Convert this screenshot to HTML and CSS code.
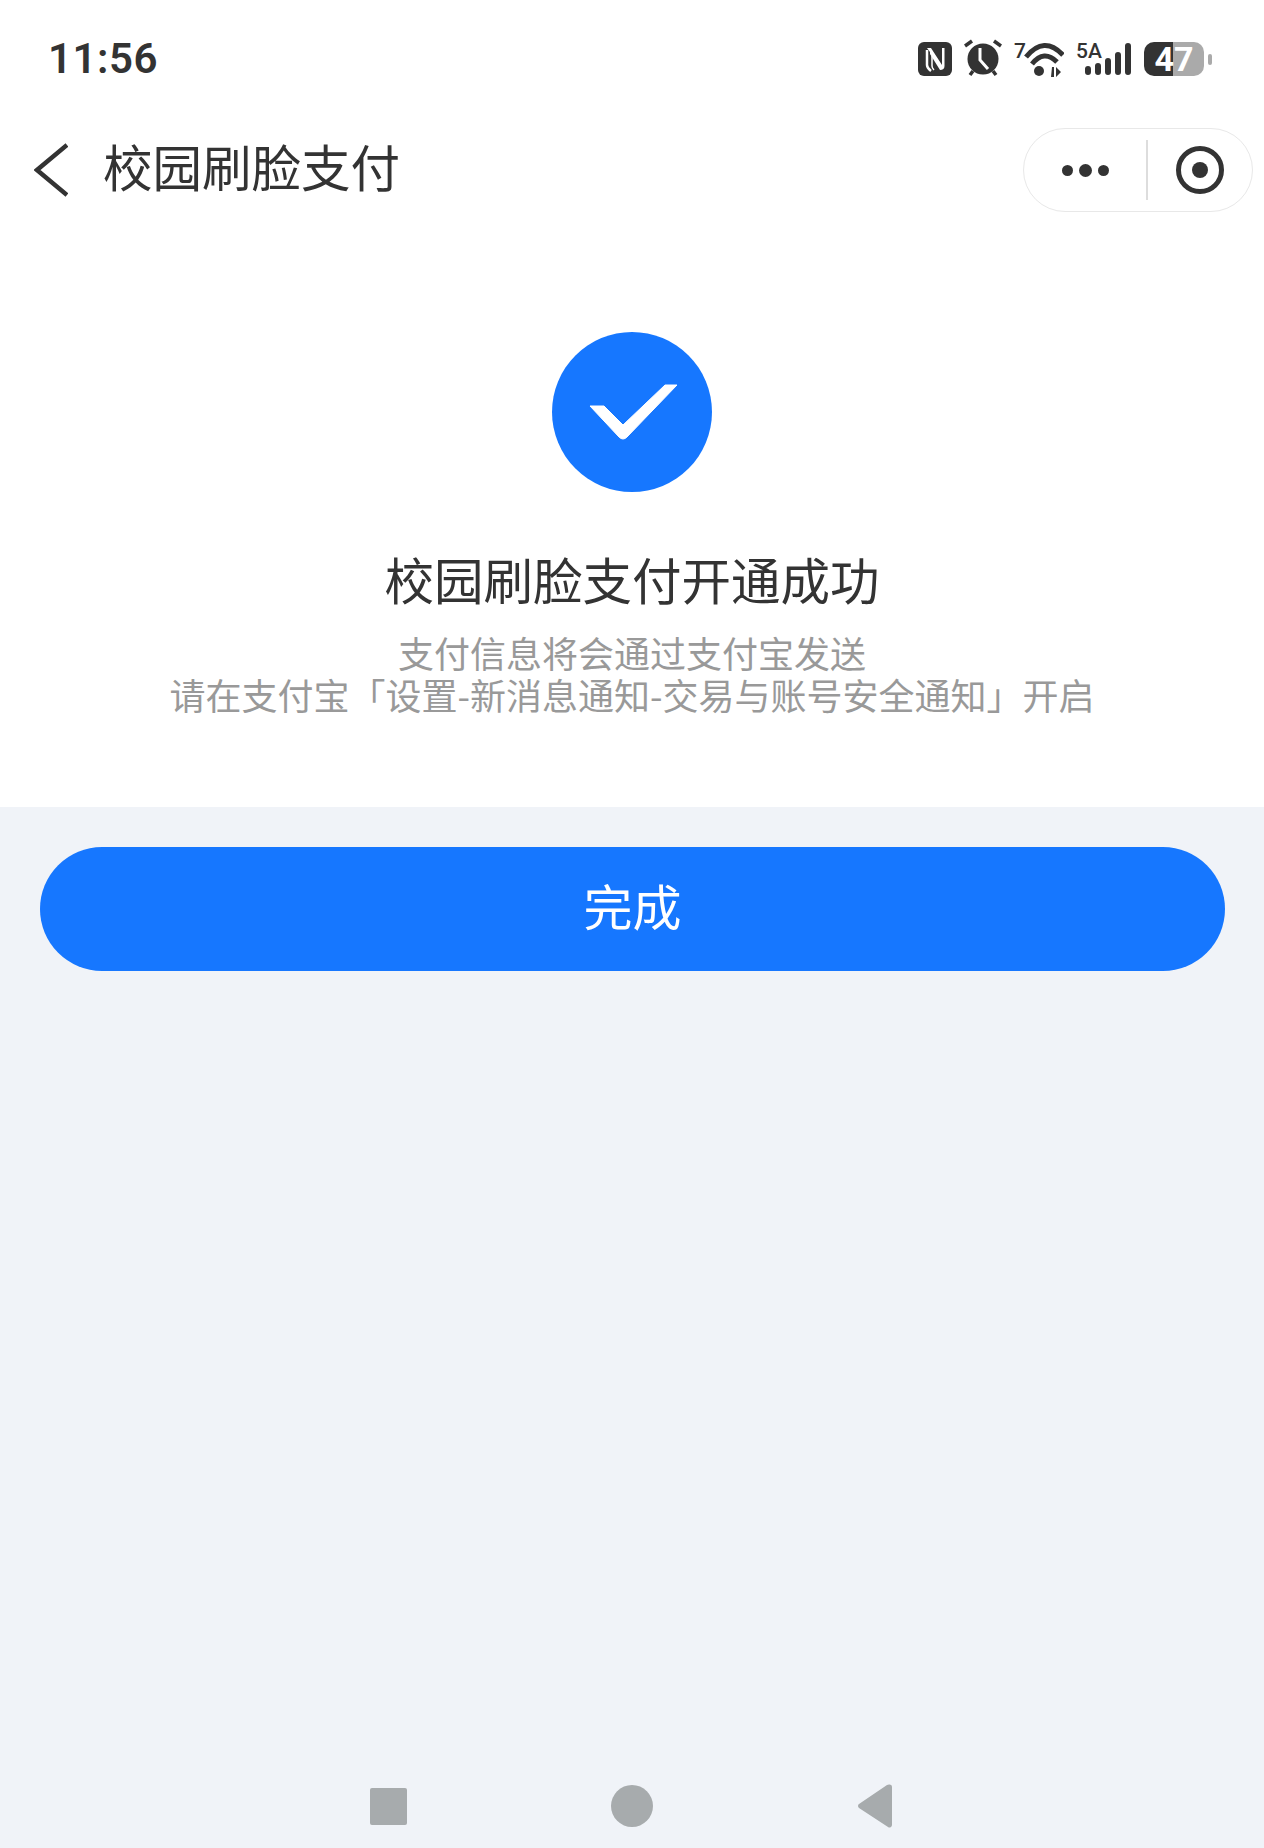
FILE: index.html
```html
<!DOCTYPE html>
<html lang="zh-CN">
<head>
  <meta charset="UTF-8">
  <meta name="viewport" content="width=device-width, initial-scale=1.0">
  <title>校园刷脸支付</title>
  <link rel="stylesheet" href="styles.css">
</head>
<body>
  <div class="page">
    <div class="top">
      <!-- 状态栏 -->
      <div class="status-bar">
        <span class="time">11:56</span>
        <div class="status-icons">
          <svg class="ic-nfc" width="34" height="34" viewBox="0 0 34 34">
            <rect width="34" height="34" rx="6" fill="#333"/>
            <path d="M9 8V23Q9 26 13 29" fill="none" stroke="#fff" stroke-width="2.500"/>
            <path d="M9 6h4L24 23V6h2.500V24Q26.500 28 22 28L12 12V10z" fill="#fff"/>
            <path d="M14 14V24Q14 26 16 28" fill="none" stroke="#fff" stroke-width="1.500"/>
          </svg>
          <svg class="ic-alarm" width="38" height="38" viewBox="0 0 38 38">
            <circle cx="19" cy="20" r="15.500" fill="#333"/>
            <path d="M1 7l7-5M37 7l-7-5M6 36l3-4M32 36l-3-4" stroke="#333" stroke-width="3.500" fill="none"/>
            <path d="M16 9v12l8 9" stroke="#fff" stroke-width="3" fill="none"/>
          </svg>
          <svg class="ic-wifi" width="50" height="42" viewBox="0 0 50 42">
            <text class="ic-text" x="0" y="20">7</text>
            <path d="M12 19Q30-3 49 17M18 26Q30 11 43 24" fill="none" stroke="#333" stroke-width="5"/>
            <circle cx="25" cy="33" r="5" fill="#333"/>
            <path d="M37 39h3V29h-2l-1 10zM42 29v10l5-5z" fill="#333"/>
          </svg>
          <svg class="ic-signal" width="56" height="42" viewBox="0 0 56 42">
            <text class="ic-text" x="0" y="20">5A</text>
            <g stroke="#333" stroke-width="6" stroke-linecap="round">
              <path d="M12 31v3M22 28v6M32 23v11M42 17v17M52 8v26"/>
            </g>
          </svg>
          <div class="battery">
            <span class="battery-body">47</span>
            <i class="battery-tip"></i>
          </div>
        </div>
      </div>

      <!-- 导航栏 -->
      <div class="nav-bar">
        <div class="nav-left">
          <svg class="back" width="34" height="54" viewBox="0 0 34 54">
            <path d="M33 2L3 27l30 25" fill="none" stroke="#333" stroke-width="4.500"/>
          </svg>
          <span class="nav-title">校园刷脸支付</span>
        </div>
        <div class="capsule">
          <div class="capsule-more">
            <i class="dot"></i><i class="dot dot-mid"></i><i class="dot"></i>
          </div>
          <div class="capsule-line"></div>
          <div class="capsule-close">
            <div class="ring"><i class="ring-dot"></i></div>
          </div>
        </div>
      </div>

      <!-- 结果 -->
      <div class="result">
        <div class="check-circle">
          <svg width="92" height="60" viewBox="0 0 92 60">
            <path d="M4 24H18L37 43 79 3H91L41 55Q37 59 33 55z" fill="#fff" stroke="#fff" stroke-width="1" stroke-linejoin="round"/>
          </svg>
        </div>
        <h2 class="result-title">校园刷脸支付开通成功</h2>
        <p class="result-desc">支付信息将会通过支付宝发送<br>请在支付宝「设置-新消息通知-交易与账号安全通知」开启</p>
      </div>
    </div>

    <div class="bottom">
      <button class="done-btn">完成</button>
      <!-- 系统导航 -->
      <div class="sys-nav">
        <i class="sys-square"></i>
        <i class="sys-circle"></i>
        <svg width="34" height="44" viewBox="0 0 34 44">
          <path d="M31 .5A2.500 2.500 0 0 1 34 3V41A2.500 2.500 0 0 1 30 43L1 24A2.500 2.500 0 0 1 1 20L29 1z" fill="#a7abad"/>
        </svg>
      </div>
    </div>
  </div>
</body>
</html>
```

FILE: styles.css
```css
* { box-sizing: border-box; }
body {
  margin: 0;
  font-family: "Noto Sans CJK SC", "Noto Sans", sans-serif;
  color: #333;
  background: #f0f3f8;
}
.page {
  display: flex;
  flex-direction: column;
  min-height: 1848px;
}
.top {
  background: #fff;
  height: 807px;
}

/* 状态栏 */
.status-bar {
  height: 116px;
  display: flex;
  align-items: flex-start;
  justify-content: space-between;
  padding: 38px 52px 0 48px;
}
.time {
  font-family: Roboto, sans-serif;
  font-size: 42px;
  line-height: 42px;
  font-weight: 600;
  letter-spacing: 0.5px;
}
.status-icons {
  display: flex;
  align-items: flex-start;
  gap: 12px;
}
.ic-nfc { margin-top: 4px; }
.ic-alarm { margin-top: 1px; }
.ic-text {
  font-family: Roboto, sans-serif;
  font-size: 21px;
  font-weight: 500;
  fill: #333;
}
.battery {
  display: flex;
  align-items: center;
  gap: 4px;
  margin-top: 4px;
}
.battery-body {
  width: 60px;
  height: 34px;
  border-radius: 10px;
  background: linear-gradient(90deg, #333 29px, #aaa 29px);
  color: #fff;
  font-family: Roboto, sans-serif;
  font-size: 34px;
  line-height: 34px;
  font-weight: 700;
  text-align: center;
}
.battery-tip {
  width: 4px;
  height: 11px;
  border-radius: 2px;
  background: #aaa;
}

/* 导航栏 */
.nav-bar {
  height: 108px;
  display: flex;
  align-items: center;
  justify-content: space-between;
  padding: 0 11px 0 34px;
}
.nav-left {
  display: flex;
  align-items: center;
  gap: 35px;
}
.back { flex: none; }
.nav-title {
  font-size: 49.500px;
  line-height: 60px;
  padding-bottom: 8px;
}
.capsule {
  width: 230px;
  height: 84px;
  border: 1px solid #e8e8e8;
  border-radius: 42px;
  display: flex;
  align-items: center;
}
.capsule-more {
  flex: 1;
  display: flex;
  align-items: center;
  justify-content: center;
  gap: 6px;
}
.dot {
  width: 11px;
  height: 11px;
  border-radius: 50%;
  background: #333;
}
.dot-mid {
  width: 13px;
  height: 13px;
}
.capsule-line {
  width: 2px;
  height: 60px;
  background: #ddd;
}
.capsule-close {
  flex: none;
  width: 104px;
  display: flex;
  justify-content: center;
}
.ring {
  width: 48px;
  height: 48px;
  border: 5px solid #333;
  border-radius: 50%;
  display: flex;
  align-items: center;
  justify-content: center;
}
.ring-dot {
  width: 16px;
  height: 16px;
  border-radius: 50%;
  background: #333;
}

/* 结果 */
.result {
  padding-top: 108px;
  display: flex;
  flex-direction: column;
  align-items: center;
}
.check-circle {
  width: 160px;
  height: 160px;
  border-radius: 50%;
  background: #1677ff;
  display: flex;
  align-items: center;
  justify-content: center;
}
.result-title {
  margin: 57px 0 0;
  font-size: 49.500px;
  line-height: 60px;
  font-weight: 400;
}
.result-desc {
  margin: 22px 0 0;
  font-size: 36px;
  line-height: 42px;
  color: #999;
  text-align: center;
}

/* 底部 */
.bottom {
  flex: 1;
  display: flex;
  flex-direction: column;
  padding: 40px 39px 0 40px;
}
.done-btn {
  height: 124px;
  border: none;
  border-radius: 62px;
  background: #1677ff;
  color: #fff;
  font-family: inherit;
  font-size: 49px;
  padding: 0 0 10px;
}
.sys-nav {
  margin-top: auto;
  padding: 0 0 24px 330px;
  display: flex;
  align-items: center;
  height: 60px;
}
.sys-square {
  width: 37px;
  height: 37px;
  border-radius: 2px;
  background: #a7abad;
  margin-right: 204px;
}
.sys-circle {
  width: 42px;
  height: 42px;
  border-radius: 50%;
  background: #a7abad;
  margin-right: 205px;
}
```
